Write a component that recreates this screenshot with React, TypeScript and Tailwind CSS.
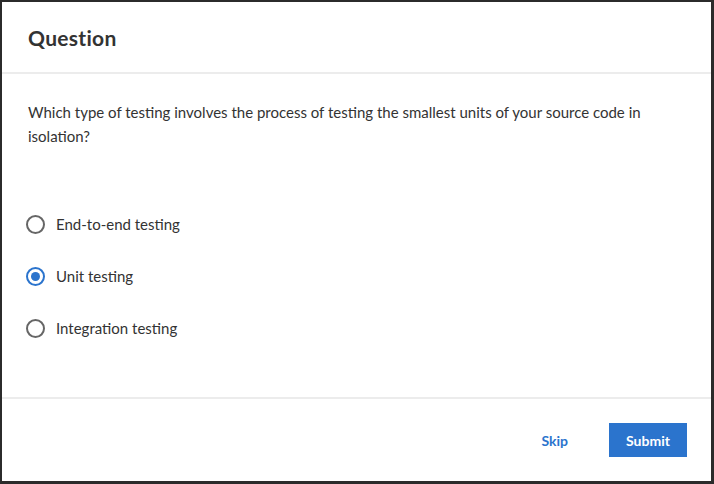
import { useState } from "react";

const options = ["End-to-end testing", "Unit testing", "Integration testing"];

export default function App() {
  const [picked, setPicked] = useState(1);

  return (
    <div className="w-[714px] h-[484px] bg-white border-2 border-r-[3px] border-b-[3px] border-[#2b2b2b] flex flex-col text-[#333333] font-['Lato',sans-serif]">
      <div className="h-[72px] shrink-0 border-b-2 border-[#ececec] flex items-center px-[26px]">
        <h1 className="text-[21px] font-bold tracking-[0.3px] mt-[2px]">Question</h1>
      </div>

      <div className="flex-1 px-[26px] pt-[26px]">
        <p className="text-[15px] leading-[24px]">
          Which type of testing involves the process of testing the smallest units of your source code in isolation?
        </p>
        <div className="mt-[65px] -ml-[2px] flex flex-col gap-[30px]">
          {options.map((opt, i) => (
            <label key={opt} className="flex items-center gap-[11px] h-[22px] cursor-pointer" onClick={() => setPicked(i)}>
              <span
                className={`w-[19px] h-[19px] rounded-full border-2 flex items-center justify-center ${
                  picked === i ? "border-[#2b74cd]" : "border-[#666666]"
                }`}
              >
                {picked === i && <span className="w-[9px] h-[9px] rounded-full bg-[#2b74cd]" />}
              </span>
              <span className="text-[15px]">{opt}</span>
            </label>
          ))}
        </div>
      </div>

      <div className="h-[84px] shrink-0 border-t-2 border-[#ececec] flex items-center justify-end pr-[24px] gap-[21px]">
        <button className="text-[14px] font-bold text-[#2b74cd] px-[20px] h-[34px]">Skip</button>
        <button className="w-[78px] h-[34px] bg-[#2b74cd] text-white text-[14px] font-bold">Submit</button>
      </div>
    </div>
  );
}
